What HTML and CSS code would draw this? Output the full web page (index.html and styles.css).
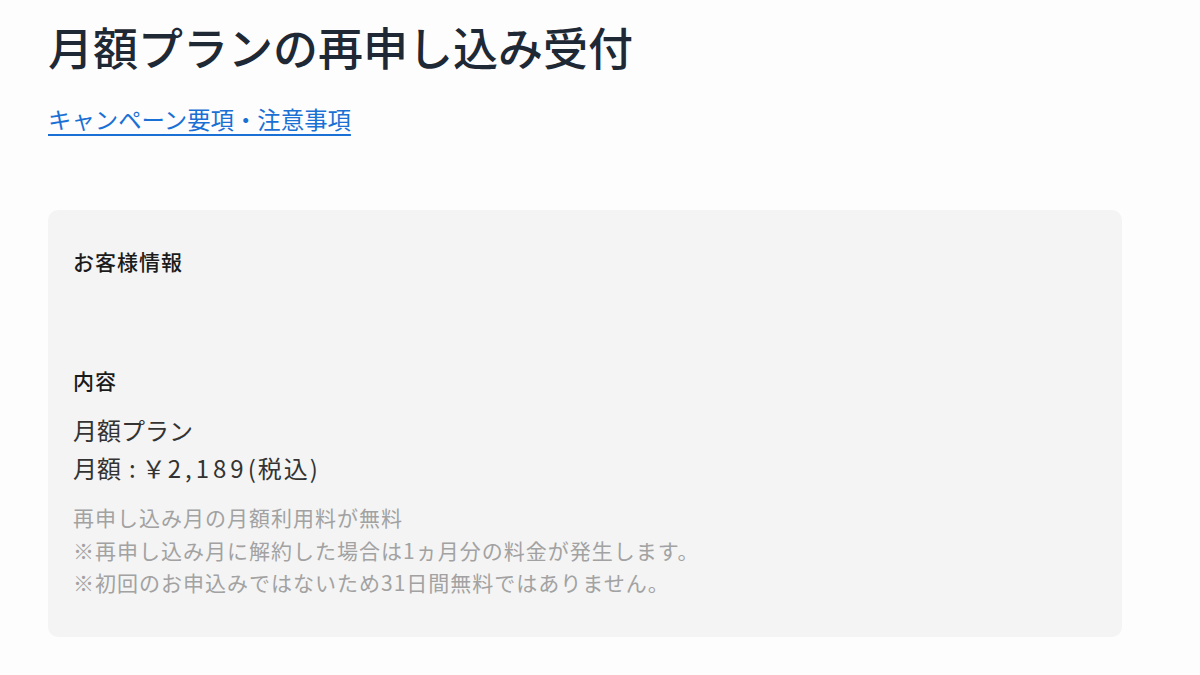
FILE: index.html
```html
<!DOCTYPE html>
<html lang="ja">
<head>
<meta charset="utf-8">
<link rel="stylesheet" href="styles.css">
</head>
<body>
<main class="page">
  <h1 class="title">月額プランの再申し込み受付</h1>
  <p class="links"><a class="link" href="#">キャンペーン要項・注意事項</a></p>
  <section class="card">
    <h2 class="label">お客様情報</h2>
    <div class="spacer"></div>
    <h2 class="label">内容</h2>
    <p class="plan">月額プラン</p>
    <p class="plan">月額<span class="colon">:</span>￥<span class="num">2,189</span><span class="paren">(税込)</span></p>
    <div class="notes">
      <p>再申し込み月の月額利用料が無料</p>
      <p>※再申し込み月に解約した場合は1ヵ月分の料金が発生します。</p>
      <p>※初回のお申込みではないため31日間無料ではありません。</p>
    </div>
  </section>
</main>
</body>
</html>
```

FILE: styles.css
```css
* { box-sizing: border-box; }
html, body { margin: 0; padding: 0; background: #fdfdfd; }
body {
  font-family: "Noto Sans CJK JP", "Noto Sans", sans-serif;
  color: #222;
}
.page {
  padding: 14px 0 0 48px;
  width: 1122px;
}
.title {
  margin: 0;
  font-size: 45px;
  font-weight: 500;
  line-height: 66px;
  color: #1f2935;
}
.links {
  margin: 22px 0 0;
  line-height: 34px;
}
.link {
  font-size: 23.4px;
  color: #1a70d4;
  text-decoration: underline;
  text-decoration-thickness: 2px;
  text-underline-offset: 5px;
}
.card {
  margin-top: 71px;
  background: #f4f4f4;
  border-radius: 10px;
  padding: 36px 25px 38px;
  height: 427px;
}
.label {
  margin: 0;
  font-size: 21px;
  letter-spacing: 1px;
  font-weight: 500;
  line-height: 30px;
  color: #1b1b1b;
}
.spacer { height: 89px; }
.plan {
  margin: 0;
  font-size: 24px;
  line-height: 38px;
  color: #333;
}
.label + .plan { margin-top: 16px; }
.colon { padding: 0 6px 0 8px; }
.num { letter-spacing: 4px; margin-left: 2px; }
.paren { letter-spacing: 2px; }
.notes {
  margin-top: 14px;
  color: #a2a2a2;
  font-size: 21px;
  letter-spacing: 1px;
  line-height: 32.5px;
}
.notes p { margin: 0; }
```
